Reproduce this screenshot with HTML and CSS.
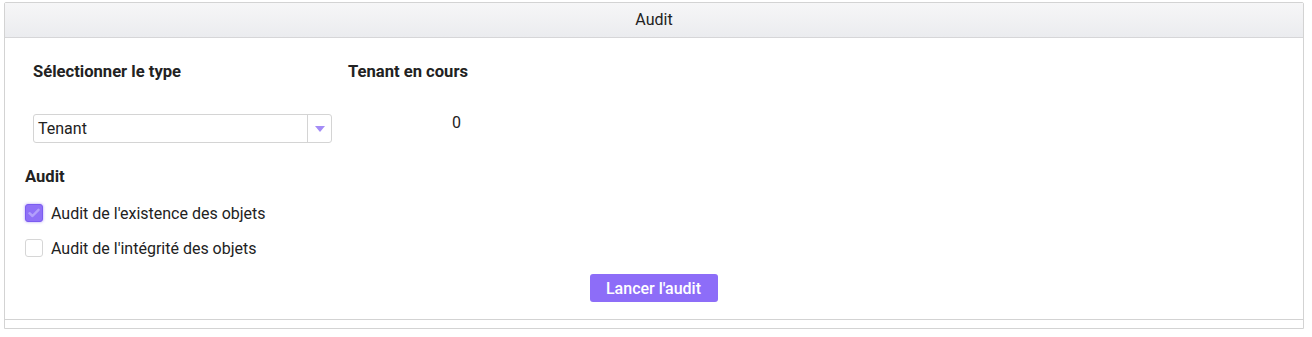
FILE: index.html
```html
<!DOCTYPE html>
<html lang="fr">
<head>
<meta charset="utf-8">
<title>Audit</title>
<link rel="stylesheet" href="styles.css">
</head>
<body>
<div class="panel">
  <div class="panel-heading">Audit</div>
  <div class="panel-body">
    <div class="row">
      <div class="col col-type">
        <div class="label">Sélectionner le type</div>
        <div class="select">
          <span class="select-value">Tenant</span>
          <span class="select-arrow"><span class="tri"></span></span>
        </div>
      </div>
      <div class="col col-tenant">
        <div class="label">Tenant en cours</div>
        <div class="value">0</div>
      </div>
    </div>
    <div class="section-title">Audit</div>
    <label class="check">
      <span class="box checked">
        <svg width="12" height="10" viewBox="0 0 12 10"><path d="M1.5 5.2 L4.5 8 L10.5 1.8" fill="none" stroke="#b3a0fb" stroke-width="2.4" stroke-linecap="round" stroke-linejoin="round"/></svg>
      </span>
      <span class="check-text">Audit de l'existence des objets</span>
    </label>
    <label class="check">
      <span class="box"></span>
      <span class="check-text">Audit de l'intégrité des objets</span>
    </label>
    <div class="actions">
      <button class="btn">Lancer l'audit</button>
    </div>
  </div>
  <div class="panel-footer"></div>
</div>
</body>
</html>
```
FILE: styles.css
```css
* { box-sizing: border-box; }
html, body { margin: 0; padding: 0; background: #fff; }
body {
  font-family: Roboto, "Liberation Sans", Arial, sans-serif;
  font-size: 16px;
  color: #222;
  padding: 2px 8px 0 4px;
}
.panel {
  width: 1300px;
  border: 1px solid #d3d3d3;
  border-radius: 2px 2px 0 0;
}
.panel-heading {
  height: 35px;
  background: linear-gradient(#f6f6f7, #ebecef);
  border-bottom: 1px solid #d6d6d8;
  text-align: center;
  line-height: 34px;
  font-size: 16px;
  color: #222;
}
.panel-body {
  height: 282px;
  padding: 24px 20px 0 20px;
  border-bottom: 1px solid #d3d3d3;
}
.row { display: flex; }
.col-type { width: 323px; padding-left: 8px; }
.col-tenant { width: 216px; }
.label {
  font-weight: 700;
  font-size: 16.6px;
  line-height: 20px;
  color: #222;
}
.select {
  margin-top: 32px;
  width: 299px;
  height: 29px;
  border: 1px solid #d4d4d4;
  border-radius: 3px;
  display: flex;
  align-items: center;
}
.select-value { flex: 1; padding-left: 4px; font-size: 16px; color: #222; }
.select-arrow {
  width: 24px;
  height: 100%;
  border-left: 1px solid #d4d4d4;
  display: flex;
  align-items: center;
  justify-content: center;
}
.tri {
  width: 0; height: 0;
  border-left: 5px solid transparent;
  border-right: 5px solid transparent;
  border-top: 6px solid #a48cf6;
}
.value {
  margin-top: 32px;
  text-align: center;
  line-height: 18px;
  font-size: 16px;
  padding-left: 1px;
}
.section-title {
  margin-top: 24px;
  font-weight: 700;
  font-size: 16.6px;
  line-height: 20px;
}
.check {
  display: flex;
  align-items: center;
  gap: 8px;
  height: 18px;
  margin-top: 17px;
}
.check + .check { margin-top: 17px; }
.box {
  width: 18px; height: 18px;
  flex: none;
  border: 1px solid #d6d6d6;
  border-radius: 3px;
  background: #fff;
  display: flex;
  align-items: center;
  justify-content: center;
}
.box.checked {
  background: #8f70f7;
  border-color: #7b5cf0;
  box-shadow: 0 0 3px rgba(123, 92, 240, 0.6);
}
.check-text { font-size: 16px; color: #222; }
.actions {
  display: flex;
  justify-content: center;
  margin-top: 17px;
}
.btn {
  width: 128px;
  height: 28px;
  background: #8d6df8;
  border: none;
  border-radius: 3px;
  color: #fff;
  font-family: Roboto, "Liberation Sans", Arial, sans-serif;
  font-weight: 500;
  font-size: 16px;
  margin-right: 1px;
}
.panel-footer {
  height: 8px;
}
```
